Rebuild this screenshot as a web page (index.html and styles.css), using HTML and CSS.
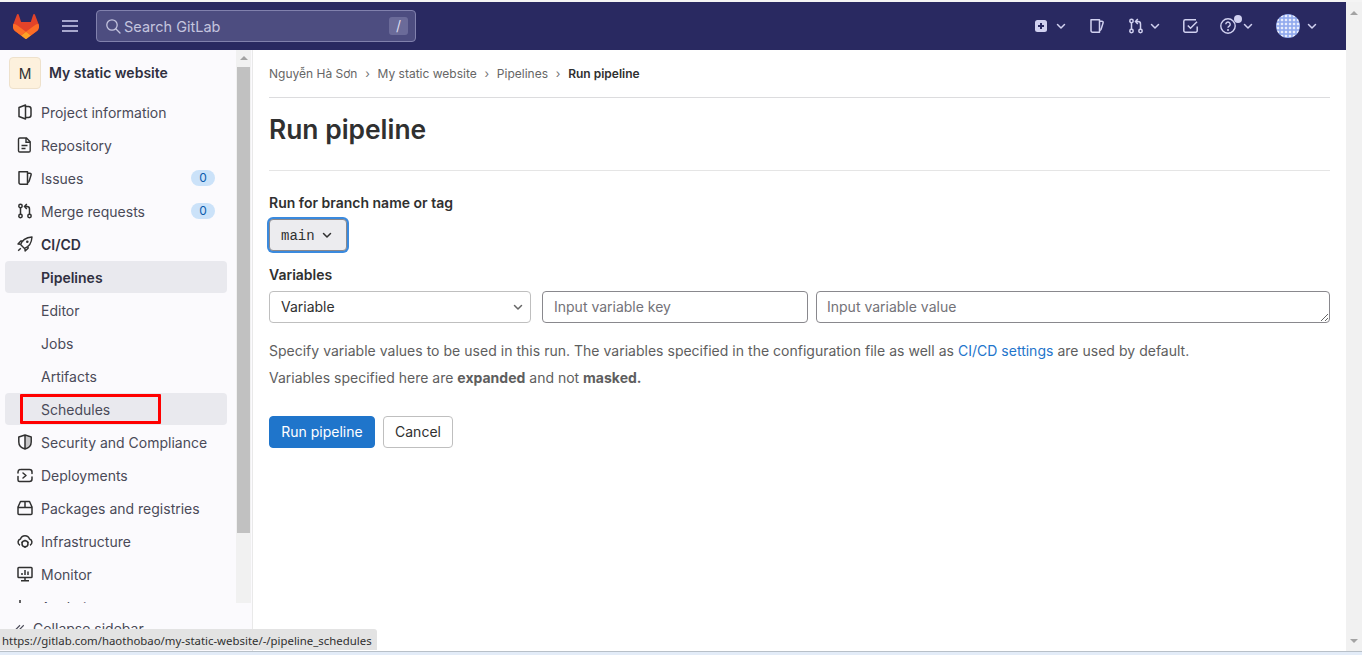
FILE: index.html
```html
<!DOCTYPE html>
<html lang="en">
<head>
    <meta charset="UTF-8">
    <title>Run pipeline</title>
    <link rel="stylesheet" href="styles.css">
</head>
<body>

<svg class="defs" width="0" height="0">
    <symbol id="i-chevron" viewBox="0 0 16 16"><path d="M4.500 6.500L8 10l3.500-3.500" fill="none" stroke="currentColor" stroke-width="1.500" stroke-linecap="round" stroke-linejoin="round"/></symbol>
    <symbol id="i-issue" viewBox="0 0 16 16"><path d="M2 1.800h8.500v12.400H3.500A1.500 1.500 0 0 1 2 12.700zM10.500 3.200h2.300c1 0 1.600.7 1.300 1.700l-2 6.300c-.3.800-1 1.200-1.600 1.200" fill="none" stroke="currentColor" stroke-width="1.500" stroke-linejoin="round"/></symbol>
    <symbol id="i-mr" viewBox="0 0 16 16"><g fill="none" stroke="currentColor" stroke-width="1.500"><circle cx="3.500" cy="3" r="1.700"/><circle cx="3.500" cy="13" r="1.700"/><circle cx="12.500" cy="13" r="1.700"/><path d="M3.500 4.700v6.600M12.500 11.300V6a2.500 2.500 0 0 0-2.500-2.500H8M9.800 1L7.500 3.500 9.800 6"/></g></symbol>
</svg>

<div class="top-line"></div>

<div class="frame">
    <div class="app">
        <header class="navbar">
            <svg class="logo" viewBox="0 0 25 24" width="26" height="25">
                <path d="m24.507 9.5-.034-.09L21.082.562a.896.896 0 0 0-1.694.091l-2.29 7.01H7.825L5.535.653a.898.898 0 0 0-1.694-.09L.451 9.411.416 9.5a6.297 6.297 0 0 0 2.09 7.278l.012.01.03.022 5.16 3.867 2.56 1.935 1.554 1.176a1.051 1.051 0 0 0 1.268 0l1.555-1.176 2.56-1.935 5.197-3.89.014-.01A6.297 6.297 0 0 0 24.507 9.5Z" fill="#E24329"/>
                <path d="m24.507 9.5-.034-.09a11.44 11.44 0 0 0-4.56 2.051l-7.447 5.632 4.742 3.584 5.197-3.89.014-.01A6.297 6.297 0 0 0 24.507 9.5Z" fill="#FC6D26"/>
                <path d="m7.707 20.677 2.56 1.935 1.555 1.176a1.051 1.051 0 0 0 1.268 0l1.555-1.176 2.56-1.935-4.743-3.584-4.755 3.584Z" fill="#FCA326"/>
                <path d="M5.01 11.461a11.43 11.43 0 0 0-4.56-2.05L.416 9.5a6.297 6.297 0 0 0 2.09 7.278l.012.01.03.022 5.16 3.867 4.745-3.584-7.444-5.632Z" fill="#FC6D26"/>
            </svg>
            <svg class="burger" viewBox="0 0 16 16" width="16" height="16"><path d="M0 3h16M0 8h16M0 13h16" stroke="currentColor" stroke-width="1.500"/></svg>
            <div class="search">
                <svg viewBox="0 0 16 16" width="16" height="16"><circle cx="7" cy="7" r="5.200" fill="none" stroke="currentColor" stroke-width="1.300"/><path d="M11 11l4 4" stroke="currentColor" stroke-width="1.300" stroke-linecap="round"/></svg>
                <span class="search-text">Search GitLab</span>
                <kbd class="slash">/</kbd>
            </div>
            <nav class="nav-icons">
                <span class="nav-item nav-new">
                    <svg viewBox="0 0 14 14" width="14" height="14"><rect x="1" y="1" width="12" height="12" rx="2.500" fill="currentColor"/><path d="M7 4v6M4 7h6" stroke="#292961" stroke-width="2"/></svg>
                    <svg class="chev" width="16" height="16"><use href="#i-chevron"/></svg>
                </span>
                <span class="nav-item nav-issue"><svg width="16" height="16"><use href="#i-issue"/></svg></span>
                <span class="nav-item nav-mr">
                    <svg width="16" height="16"><use href="#i-mr"/></svg>
                    <svg class="chev" width="16" height="16"><use href="#i-chevron"/></svg>
                </span>
                <span class="nav-item nav-todo">
                    <svg viewBox="0 0 16 16" width="16" height="16"><path d="M14.200 8.500v4.200a1.500 1.500 0 0 1-1.500 1.500H2.300a1.500 1.500 0 0 1-1.500-1.500V3.300a1.500 1.500 0 0 1 1.500-1.500H13M4.800 7.500l2.700 2.700 6.500-6.500" fill="none" stroke="currentColor" stroke-width="1.500"/></svg>
                </span>
                <span class="nav-item nav-help">
                    <svg viewBox="0 0 16 16" width="16" height="16"><circle cx="8" cy="8" r="7.200" fill="none" stroke="currentColor" stroke-width="1.400"/><path d="M5.800 6.200a2.200 2.200 0 1 1 3.400 1.900c-.8.500-1.200.9-1.200 1.700" fill="none" stroke="currentColor" stroke-width="1.400"/><circle cx="8" cy="12" r="1" fill="currentColor"/></svg>
                    <i class="help-dot"></i>
                    <svg class="chev" width="16" height="16"><use href="#i-chevron"/></svg>
                </span>
                <span class="nav-item nav-user">
                    <svg class="avatar" viewBox="0 0 24 24" width="24" height="24">
                        <defs><pattern id="grid" width="4" height="4" patternUnits="userSpaceOnUse"><rect width="4" height="4" fill="#8fa9ee"/><rect x=".8" y=".8" width="2.400" height="2.400" fill="#e8edfc"/></pattern></defs>
                        <circle cx="12" cy="12" r="12" fill="url(#grid)"/>
                    </svg>
                    <svg class="chev" width="16" height="16"><use href="#i-chevron"/></svg>
                </span>
            </nav>
        </header>

        <div class="body-row">
            <aside class="sidebar">
                <div class="side-scroll">
                    <div class="side-list">
                        <div class="project">
                            <span class="project-avatar">M</span>
                            <span class="project-name">My static website</span>
                        </div>
                        <a class="side-item">
                            <svg viewBox="0 0 16 16" width="16" height="16"><path d="M2 3.500L8.500 1v14L2 12.500zM8.500 2.500H11.500a2.500 2.500 0 0 1 2.500 2.500v6a2.500 2.500 0 0 1-2.500 2.500H8.500" fill="none" stroke="currentColor" stroke-width="1.500" stroke-linejoin="round"/></svg>
                            Project information
                        </a>
                        <a class="side-item">
                            <svg viewBox="0 0 16 16" width="16" height="16"><path d="M2.800 1h6.700l3.700 3.700v9a1.300 1.300 0 0 1-1.300 1.300H2.800a1.300 1.300 0 0 1-1.300-1.300V2.300A1.300 1.300 0 0 1 2.800 1zM9 1v4.200h4.200M4.500 8.500h6M4.500 11.500h4" fill="none" stroke="currentColor" stroke-width="1.400"/></svg>
                            Repository
                        </a>
                        <a class="side-item">
                            <svg width="16" height="16"><use href="#i-issue"/></svg>
                            Issues
                            <span class="count">0</span>
                        </a>
                        <a class="side-item">
                            <svg width="16" height="16"><use href="#i-mr"/></svg>
                            Merge requests
                            <span class="count">0</span>
                        </a>
                        <a class="side-item side-current">
                            <svg viewBox="0 0 16 16" width="16" height="16"><path d="M5.500 10.500L3.600 8.600C5 4 9.500 1.500 15 1c-.4 5.500-3 10-7.500 11.400zM4 8.300L1 8l2.800-3h2.700M7.800 12l.3 3 3-2.800V9.500M3.800 12.200L1.200 14.800" fill="none" stroke="currentColor" stroke-width="1.400" stroke-linejoin="round"/><circle cx="10.300" cy="5.700" r="1.300" fill="currentColor"/></svg>
                            CI/CD
                        </a>
                        <a class="side-sub side-active">Pipelines</a>
                        <a class="side-sub">Editor</a>
                        <a class="side-sub">Jobs</a>
                        <a class="side-sub">Artifacts</a>
                        <a class="side-sub side-hover">Schedules<i class="red-box"></i></a>
                        <a class="side-item">
                            <svg viewBox="0 0 16 16" width="16" height="16"><path d="M8 1l6.200 2v5c0 3.500-2.700 6-6.200 7-3.500-1-6.200-3.500-6.200-7V3zM8 1v14" fill="none" stroke="currentColor" stroke-width="1.500" stroke-linejoin="round"/><path d="M8 2l5.500 1.800V8c0 3-2.500 5-5.500 6z" fill="currentColor" opacity=".25"/></svg>
                            Security and Compliance
                        </a>
                        <a class="side-item">
                            <svg viewBox="0 0 16 16" width="16" height="16"><path d="M4 2.500h8.500A2.500 2.500 0 0 1 15 5v1.500M1 9.500V13a1.500 1.500 0 0 0 1.500 1.500H12.500A2.500 2.500 0 0 0 15 12V10M1 6V5a2.500 2.500 0 0 1 2-2.400M6 6l3 2.500L6 11" fill="none" stroke="currentColor" stroke-width="1.500" stroke-linecap="round" stroke-linejoin="round"/></svg>
                            Deployments
                        </a>
                        <a class="side-item">
                            <svg viewBox="0 0 16 16" width="16" height="16"><path d="M1 7l2.500-5.500h9L15 7v6.500a1 1 0 0 1-1 1H2a1 1 0 0 1-1-1zM1 7.500h14M8 1.500v6" fill="none" stroke="currentColor" stroke-width="1.500" stroke-linejoin="round"/></svg>
                            Packages and registries
                        </a>
                        <a class="side-item">
                            <svg viewBox="0 0 16 16" width="16" height="16"><path d="M3 12.200A3.300 3.300 0 0 1 3.500 6 4.700 4.700 0 0 1 12.500 6a3.300 3.300 0 0 1 .5 6.200" fill="none" stroke="currentColor" stroke-width="1.500"/><circle cx="8" cy="10.800" r="3" fill="none" stroke="currentColor" stroke-width="1.500"/><path d="M8 6.800v1M8 13.800v1.200M4.500 9l1 .7M11.500 9l-1 .7" stroke="currentColor" stroke-width="1.400"/></svg>
                            Infrastructure
                        </a>
                        <a class="side-item">
                            <svg viewBox="0 0 16 16" width="16" height="16"><path d="M1.800 1.500h12.400a.8.8 0 0 1 .8.800v8.400a.8.8 0 0 1-.8.800H1.800a.8.8 0 0 1-.8-.8V2.300a.8.8 0 0 1 .8-.8zM8 11.500v3M4 14.800h8M5 9V7M8 9V4M11 9V5.500" fill="none" stroke="currentColor" stroke-width="1.500"/></svg>
                            Monitor
                        </a>
                        <a class="side-item">
                            <svg viewBox="0 0 16 16" width="16" height="16"><path d="M3 1v14M3 8h10" fill="none" stroke="currentColor" stroke-width="1.500"/></svg>
                            Analytics
                        </a>
                    </div>
                    <div class="side-track">
                        <span class="arrow-up"></span>
                        <span class="side-thumb"></span>
                    </div>
                </div>
                <div class="collapse">
                    <svg viewBox="0 0 16 16" width="12" height="12"><path d="M8 3L3 8l5 5M13 3L8 8l5 5" fill="none" stroke="currentColor" stroke-width="1.500"/></svg>
                    Collapse sidebar
                </div>
            </aside>

            <main class="content">
                <ul class="crumbs">
                    <li>Nguyễn Hà Sơn</li>
                    <li>My static website</li>
                    <li>Pipelines</li>
                    <li class="crumb-last">Run pipeline</li>
                </ul>
                <h1 class="page-title">Run pipeline</h1>
                <form class="run-form" onsubmit="return false;">
                    <label class="field-label">Run for branch name or tag</label>
                    <button type="button" class="ref-btn"><span class="ref-name">main</span> <svg width="16" height="16"><use href="#i-chevron"/></svg></button>
                    <label class="field-label vars-label">Variables</label>
                    <div class="var-row">
                        <div class="var-type"><span class="var-type-text">Variable</span> <svg width="16" height="16"><use href="#i-chevron"/></svg></div>
                        <input class="var-key" type="text" placeholder="Input variable key">
                        <textarea class="var-value" placeholder="Input variable value"></textarea>
                    </div>
                    <p class="help help-first">Specify variable values to be used in this run. The variables specified in the configuration file as well as <a class="link">CI/CD settings</a> are used by default.</p>
                    <p class="help">Variables specified here are <b>expanded</b> and not <b>masked.</b></p>
                    <div class="actions">
                        <button type="button" class="btn btn-primary">Run pipeline</button>
                        <button type="button" class="btn btn-cancel">Cancel</button>
                    </div>
                </form>
            </main>
        </div>
    </div>

    <div class="page-scroll">
        <span class="arrow-up"></span>
        <span class="arrow-down"></span>
    </div>
</div>

<div class="bottom-strip"></div>
<div class="status-tip">https://gitlab.com/haothobao/my-static-website/-/pipeline_schedules</div>

</body>
</html>
```

FILE: styles.css
```css
* {
    box-sizing: border-box;
}
html, body {
    height: 100%;
    margin: 0;
    overflow: hidden;
}
body {
    font-family: 'Inter', 'Noto Sans', sans-serif;
    font-size: 14px;
    color: #303030;
    background: #fff;
    display: flex;
    flex-direction: column;
}
.defs {
    position: absolute;
}
.top-line {
    height: 2px;
    background: #f4f4f4;
}
.frame {
    flex: 1;
    display: flex;
    min-height: 0;
}
.bottom-strip {
    height: 4px;
    background: #e3ecf8;
    border-top: 1px solid #b8c0c8;
}
.app {
    flex: 1;
    min-width: 0;
    display: flex;
    flex-direction: column;
}

/* top bar */
.navbar {
    height: 48px;
    background: #292961;
    color: #d1d1f0;
    display: flex;
    align-items: center;
    padding-left: 13px;
}
.burger {
    margin-left: 23px;
    color: #d1d1f0;
}
.search {
    width: 320px;
    height: 32px;
    margin-left: 18px;
    padding: 0 7px 0 8px;
    display: flex;
    align-items: center;
    gap: 3px;
    background: #4d4d80;
    border: 1px solid #8181ad;
    border-radius: 4px;
    color: #c4c4de;
}
.search-text {
    flex: 1;
    font-size: 14.500px;
}
.slash {
    width: 19px;
    height: 18px;
    border-radius: 3px;
    background: #6b6b99;
    color: #dcdcf0;
    font-family: 'Inter', sans-serif;
    font-size: 14px;
    text-align: center;
    line-height: 18px;
}
.nav-icons {
    margin-left: auto;
    display: flex;
    align-items: center;
    padding-right: 26px;
}
.nav-item {
    position: relative;
    display: flex;
    align-items: center;
}
.nav-new .chev {
    margin-left: 5px;
}
.nav-issue {
    margin-left: 20px;
}
.nav-mr {
    margin-left: 23px;
}
.nav-mr .chev {
    margin-left: 3px;
}
.nav-todo {
    margin-left: 20px;
}
.nav-help {
    margin-left: 21px;
}
.nav-help .chev {
    margin-left: 4px;
}
.nav-user {
    margin-left: 20px;
}
.nav-user .chev {
    margin-left: 4px;
}
.help-dot {
    position: absolute;
    left: 14px;
    top: -3px;
    width: 8px;
    height: 8px;
    border-radius: 50%;
    background: #d1d1f0;
}

/* sidebar */
.body-row {
    flex: 1;
    display: flex;
    min-height: 0;
}
.sidebar {
    width: 253px;
    flex: none;
    display: flex;
    flex-direction: column;
    background: #fbfafd;
    border-right: 1px solid #e9e9e9;
}
.side-scroll {
    height: 553px;
    flex: none;
    display: flex;
    overflow: hidden;
}
.side-list {
    width: 236px;
    flex: none;
    padding: 0 9px 0 5px;
    color: #4a4a58;
}
.project {
    height: 46px;
    padding-left: 4px;
    display: flex;
    align-items: center;
    gap: 8px;
}
.project-avatar {
    width: 32px;
    height: 32px;
    display: flex;
    align-items: center;
    justify-content: center;
    background: #fdf1dd;
    border: 1px solid #eee1cc;
    border-radius: 4px;
    color: #303030;
}
.project-name {
    padding-bottom: 2px;
    font-weight: 600;
    color: #303040;
}
.side-item, .side-sub {
    position: relative;
    height: 32px;
    margin-bottom: 1px;
    display: flex;
    align-items: center;
    border-radius: 4px;
}
.side-item {
    padding: 0 12px;
    gap: 8px;
}
.side-item svg {
    color: #303030;
    flex: none;
}
.side-sub {
    padding-left: 36px;
}
.side-current {
    font-weight: 600;
    color: #303040;
}
.side-active {
    background: #e9e9ee;
    font-weight: 600;
    color: #303040;
}
.side-hover {
    background: #e9e9ee;
}
.red-box {
    position: absolute;
    left: 15px;
    top: 1px;
    width: 141px;
    height: 30px;
    border: 3px solid #f00;
    border-radius: 1px;
}
.count {
    margin-left: auto;
    min-width: 24px;
    height: 16px;
    line-height: 16px;
    border-radius: 8px;
    background: #cbe2f9;
    color: #0b5cad;
    font-size: 12px;
    text-align: center;
}
.side-track {
    width: 15px;
    flex: none;
    background: #f1f1f1;
    padding: 6px 1px 0;
    display: flex;
    flex-direction: column;
    align-items: center;
}
.side-thumb {
    width: 13px;
    height: 466px;
    margin-top: 7px;
    background: #c1c1c1;
}
.arrow-up, .arrow-down {
    width: 0;
    height: 0;
    border-left: 4px solid transparent;
    border-right: 4px solid transparent;
}
.arrow-up {
    border-bottom: 4px solid #a3a3a3;
}
.arrow-down {
    border-top: 4px solid #a3a3a3;
}
.collapse {
    padding: 17px 0 0 14px;
    display: flex;
    align-items: center;
    gap: 7px;
    color: #4a4a58;
}

/* main area */
.content {
    flex: 1;
    min-width: 0;
    padding: 0 16px;
}
.crumbs {
    list-style: none;
    margin: 0;
    padding: 0;
    height: 48px;
    display: flex;
    align-items: center;
    font-size: 12px;
    color: #666;
    border-bottom: 1px solid #dcdcde;
}
.crumbs li + li::before {
    content: "›";
    margin: 0 7.750px;
    color: #737373;
}
.crumb-last {
    font-weight: 600;
    color: #303030;
}
.crumb-last::before {
    font-weight: 400;
}
.page-title {
    margin: 0;
    height: 73px;
    padding-top: 14px;
    font-size: 26.400px;
    line-height: 34px;
    font-weight: 600;
    border-bottom: 1px solid #e5e5e5;
}
.run-form {
    padding-top: 23px;
}
.field-label {
    display: block;
    font-weight: 600;
    line-height: 18px;
}
.ref-btn {
    display: flex;
    align-items: center;
    gap: 4px;
    height: 32px;
    margin: 7px 0 0;
    padding: 0 11px;
    background: #ececef;
    border: 1px solid #89888d;
    border-radius: 4px;
    box-shadow: 0 0 0 2px #3a8ade;
    font-family: 'Liberation Mono', monospace;
    font-size: 14px;
    color: #303030;
}
.ref-name {
    padding-top: 1px;
}
.vars-label {
    margin-top: 15px;
}
.var-row {
    display: flex;
    margin-top: 7px;
    height: 32px;
}
.var-type {
    width: 262px;
    display: flex;
    align-items: center;
    justify-content: space-between;
    padding: 0 4px 0 11px;
    border: 1px solid #bfbfbf;
    border-radius: 4px;
    color: #303030;
}
.var-type svg {
    color: #666;
}
.var-type-text {
    padding-bottom: 2px;
}
.var-key, .var-value {
    height: 32px;
    margin: 0;
    border: 1px solid #89888d;
    border-radius: 4px;
    font-family: inherit;
    font-size: 14px;
    color: #303030;
}
.var-key {
    width: 266px;
    margin-left: 11px;
    padding: 0 11px 2px;
}
.var-value {
    flex: 1;
    margin-left: 8px;
    padding: 6px 10px 0;
    line-height: 17px;
    resize: vertical;
}
.var-key::placeholder, .var-value::placeholder {
    color: #737278;
    opacity: 1;
}
.help {
    margin: 0;
    color: #5e5e5e;
    line-height: 20px;
}
.help-first {
    word-spacing: 0.100px;
}
.var-row + .help {
    margin-top: 18px;
}
.help + .help {
    margin-top: 7px;
}
.link {
    color: #1f75cb;
}
.actions {
    display: flex;
    gap: 8px;
    margin-top: 28px;
}
.btn {
    height: 32px;
    padding: 0 0 2px;
    background: #fff;
    border: 1px solid #bfbfbf;
    border-radius: 4px;
    font-family: inherit;
    font-size: 14px;
    color: #303030;
}
.btn-primary {
    width: 106px;
    background: #1f75cb;
    border-color: #1f75cb;
    color: #fff;
}
.btn-cancel {
    width: 70px;
}

/* right page scrollbar */
.page-scroll {
    width: 16px;
    flex: none;
    background: #f1f1f1;
    display: flex;
    flex-direction: column;
    align-items: center;
    justify-content: space-between;
    padding: 9px 0 8px;
}

/* link preview in the corner */
.status-tip {
    position: absolute;
    left: 0;
    top: 629px;
    width: 377px;
    height: 21px;
    padding: 2px 0 0 2px;
    background: #e3e3e3;
    border-top-right-radius: 3px;
    font-family: 'Noto Sans', sans-serif;
    font-size: 11.400px;
    line-height: 19px;
    color: #303030;
    white-space: nowrap;
    overflow: hidden;
}
```
